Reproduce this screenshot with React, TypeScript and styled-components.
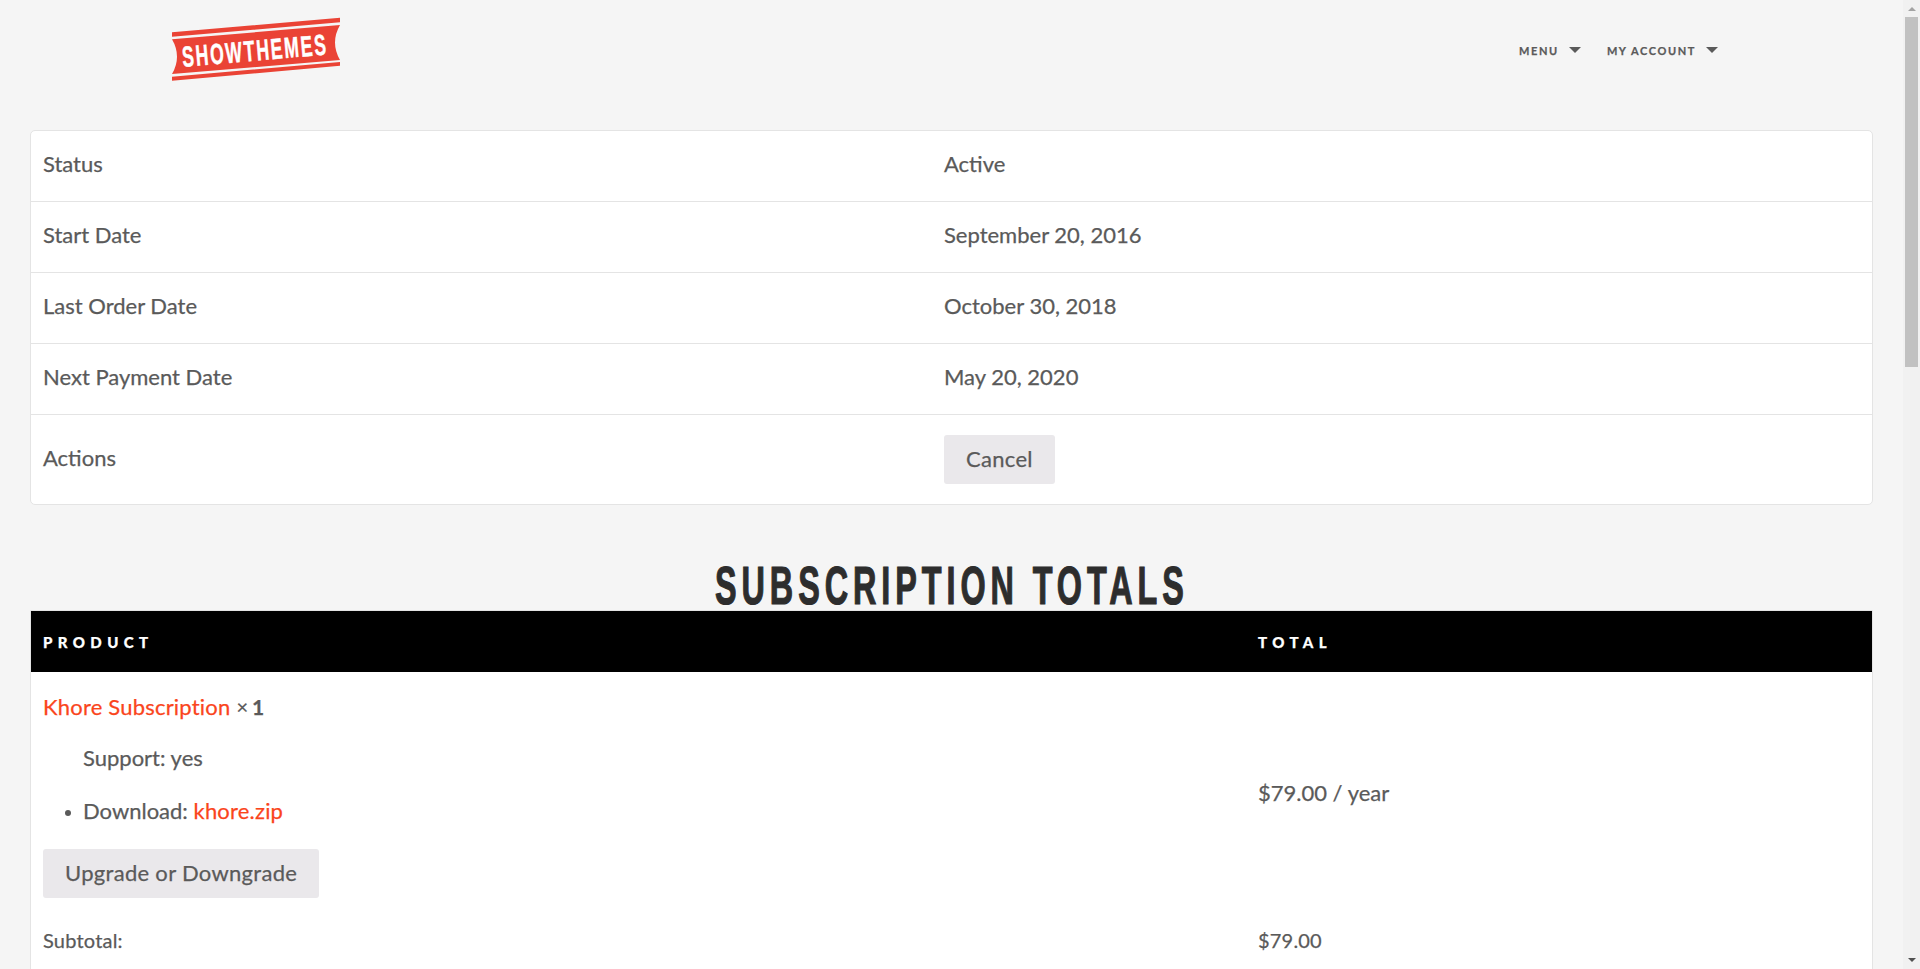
import React from "react";
import styled, { createGlobalStyle } from "styled-components";

const Global = createGlobalStyle`
  html, body { margin: 0; padding: 0; background: #f5f5f5; }
  body {
    font-family: "Lato", "Liberation Sans", sans-serif;
    color: #5a5a5a;
    -webkit-text-stroke: 0.25px currentColor;
  }
`;

const Page = styled.div`
  min-height: 2590px;
  padding: 0 47px 0 30px;
  box-sizing: border-box;
`;

const Header = styled.header`
  height: 130px;
  display: flex;
  align-items: flex-start;
  justify-content: space-between;
  padding: 17px 155px 0 142px;
  box-sizing: border-box;
`;

const Nav = styled.nav`
  display: flex;
  gap: 26px;
  margin-top: 27px;
`;

const NavItem = styled.span`
  display: flex;
  align-items: center;
  gap: 10px;
  font-size: 11px;
  font-weight: 700;
  letter-spacing: 1.6px;
  color: #5a5a5a;
  line-height: 14px;
`;

const Caret = styled.i`
  width: 0;
  height: 0;
  border-left: 6px solid transparent;
  border-right: 6px solid transparent;
  border-top: 6px solid #5a5a5a;
  margin-top: -3px;
`;

const Card = styled.div`
  background: #fff;
  border: 1px solid #e4e4e4;
  border-radius: 5px;
`;

const Row = styled.div<{ $h: number }>`
  height: ${(p) => p.$h}px;
  display: flex;
  align-items: center;
  padding: 0 12px;
  font-size: 22px;
  & + & { border-top: 1px solid #e4e4e4; }
`;

const Label = styled.div`
  width: 901px;
  padding-bottom: 5px;
`;

const Value = styled.div`
  padding-bottom: 5px;
`;

const Button = styled.span`
  display: inline-flex;
  align-items: center;
  justify-content: center;
  box-sizing: border-box;
  height: 49px;
  padding: 0 22px 3px;
  background: #eae8eb;
  border-radius: 3px;
  font-size: 22px;
  letter-spacing: 0.3px;
`;

const Title = styled.h2`
  margin: 0;
  padding-top: 55px;
  height: 105px;
  box-sizing: border-box;
  text-align: center;
  font-family: "Liberation Sans", sans-serif;
  font-size: 54px;
  line-height: 50px;
  font-weight: 700;
  letter-spacing: 8.2px;
  color: #2d2d2d;
`;

const TitleText = styled.span`
  display: inline-block;
  transform: scaleX(0.6);
  white-space: nowrap;
  -webkit-text-stroke: 1.2px #2d2d2d;
`;

const Totals = styled.div`
  background: #fff;
  border: 1px solid #e4e4e4;
  border-radius: 0 0 5px 5px;
  margin-bottom: 60px;
`;

const HeadRow = styled.div`
  height: 61px;
  background: #000;
  color: #fff;
  display: grid;
  grid-template-columns: 1215px 1fr;
  align-items: center;
  padding: 0 12px;
  font-size: 15px;
  font-weight: 900;
  letter-spacing: 5.4px;
`;

const ProductRow = styled.div`
  display: grid;
  grid-template-columns: 1215px 1fr;
  align-items: center;
  padding: 0 12px;
  height: 245px;
  font-size: 22px;
`;

const ProductCell = styled.div`
  display: flex;
  flex-direction: column;
  align-items: flex-start;
  height: 245px;
`;

const Line = styled.div<{ $indent?: boolean; $h: number }>`
  box-sizing: border-box;
  height: ${(p) => p.$h}px;
  display: flex;
  align-items: center;
  position: relative;
  padding-bottom: 2px;
  padding-left: ${(p) => (p.$indent ? 40 : 0)}px;
`;

const Bullet = styled.i`
  position: absolute;
  left: 22px;
  top: 50%;
  width: 6px;
  height: 6px;
  margin-top: -2px;
  border-radius: 50%;
  background: #5a5a5a;
`;

const Orange = styled.a<{ $gap?: boolean }>`
  color: #fa451c;
  text-decoration: none;
  letter-spacing: 0.2px;
  margin-right: ${(p) => (p.$gap ? 6 : 0)}px;
`;

const Times = styled.span`
  font-size: 20px;
  margin-right: 4px;
`;

const Qty = styled.strong`
  font-size: 21px;
  font-weight: 700;
`;

const Price = styled.div`
  padding-bottom: 4px;
`;

const SubRow = styled.div`
  display: grid;
  grid-template-columns: 1215px 1fr;
  align-items: center;
  padding: 0 12px 5px;
  height: 45px;
  font-size: 20px;
  letter-spacing: 0.2px;
`;

const TableRest = styled.div`
  height: 300px;
`;

const Scrollbar = styled.div`
  position: fixed;
  top: 0;
  right: 0;
  width: 17px;
  height: 969px;
  background: #f1f1f1;
  display: flex;
  flex-direction: column;
  align-items: center;
`;

const Arrow = styled.i<{ $up?: boolean; $c: string }>`
  display: block;
  margin: ${(p) => (p.$up ? "7px 0 6px" : "0 0 7px")};
  width: 0;
  height: 0;
  border-left: 4px solid transparent;
  border-right: 4px solid transparent;
  ${(p) => (p.$up ? `border-bottom: 4px solid ${p.$c};` : `border-top: 4px solid ${p.$c};`)}
`;

const Thumb = styled.div`
  width: 13px;
  height: 350px;
  background: #c1c1c1;
`;

const Fill = styled.div`
  flex: 1;
`;

const Logo = () => (
  <svg width="170" height="66" viewBox="0 0 170 66" overflow="visible">
    <path
      fill="#ea4335"
      d="M0 15.3 L168 .7 L168 5.3 L0 19.7 Z M0 59.7 L168 45 L168 48.7 L0 63.7 Z M0 22.3 L168 8 Q158 25.5 168 43 L0 57 Q10 39.6 0 22.3 Z"
    />
    <text
      x="11"
      y="50"
      fill="#fff"
      stroke="#fff"
      strokeWidth="0.5"
      fontFamily="Liberation Sans, sans-serif"
      fontWeight="700"
      fontSize="29"
      letterSpacing="3"
      textLength="146"
      lengthAdjust="spacingAndGlyphs"
      transform="rotate(-5 11 50)"
    >
      SHOWTHEMES
    </text>
  </svg>
);

export default function App() {
  return (
    <>
      <Global />
      <Page>
        <Header>
          <Logo />
          <Nav>
            <NavItem>MENU <Caret /></NavItem>
            <NavItem>MY ACCOUNT <Caret /></NavItem>
          </Nav>
        </Header>
        <Card>
          <Row $h={70}><Label>Status</Label><Value>Active</Value></Row>
          <Row $h={70}><Label>Start Date</Label><Value>September 20, 2016</Value></Row>
          <Row $h={70}><Label>Last Order Date</Label><Value>October 30, 2018</Value></Row>
          <Row $h={70}><Label>Next Payment Date</Label><Value>May 20, 2020</Value></Row>
          <Row $h={89}><Label>Actions</Label><Button>Cancel</Button></Row>
        </Card>
        <Title><TitleText>SUBSCRIPTION TOTALS</TitleText></Title>
        <Totals>
          <HeadRow><span>PRODUCT</span><span>TOTAL</span></HeadRow>
          <ProductRow>
            <ProductCell>
              <Line $h={70}><Orange $gap>Khore Subscription</Orange><Times>×</Times><Qty>1</Qty></Line>
              <Line $h={32} $indent>Support: yes</Line>
              <Line $h={75} $indent><Bullet />Download:&nbsp;<Orange>khore.zip</Orange></Line>
              <Button>Upgrade or Downgrade</Button>
            </ProductCell>
            <Price>$79.00 / year</Price>
          </ProductRow>
          <SubRow><span>Subtotal:</span><span>$79.00</span></SubRow>
          <TableRest />
        </Totals>
      </Page>
      <Scrollbar>
        <Arrow $up $c="#a3a3a3" />
        <Thumb />
        <Fill />
        <Arrow $c="#505050" />
      </Scrollbar>
    </>
  );
}
